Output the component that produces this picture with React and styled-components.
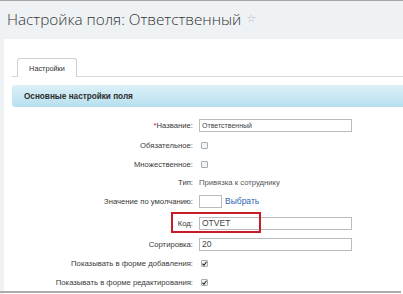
import React from 'react'
import styled, { createGlobalStyle } from 'styled-components'

const GlobalStyle = createGlobalStyle`
  html, body { margin: 0; padding: 0; }
  body {
    background: #eef2f4;
    font-family: "Liberation Sans", Arial, sans-serif;
    overflow: hidden;
  }
`

const Page = styled.div`
  width: 403px;
  height: 294px;
  border-top: 1px solid #a3a6a9;
  box-sizing: border-box;
  display: flex;
  flex-direction: column;
`

const TitleBar = styled.div`
  height: 38px;
  display: flex;
  align-items: center;
  padding-left: 7px;
  padding-bottom: 3px;
  box-sizing: border-box;
`

const Title = styled.h1`
  margin: 0;
  font-family: "Open Sans", "Noto Sans", sans-serif;
  font-weight: 300;
  font-size: 15.3px;
  color: #333;
`

const Star = styled.span`
  margin-left: 5px;
  font-size: 11px;
  color: #b8bcc0;
  font-family: "DejaVu Sans", sans-serif;
`

const Panel = styled.div`
  margin-left: 4px;
  background: #fff;
  padding: 19px 0 0 8px;
  flex: 1;
  display: flex;
  flex-direction: column;
`

const TabBar = styled.div`
  display: flex;
  border-bottom: 1px solid #d6d8da;
  padding-left: 5px;
  height: 18px;
`

const Tab = styled.div`
  width: 60px;
  height: 19px;
  box-sizing: border-box;
  border: 1px solid #cfd2d4;
  border-bottom: none;
  border-radius: 3px 3px 0 0;
  background: #fff;
  font-size: 7.3px;
  color: #333;
  display: flex;
  align-items: center;
  justify-content: center;
`

const SectionHeader = styled.div`
  margin-top: 8px;
  height: 22px;
  border-radius: 3px 0 0 3px;
  background: linear-gradient(to bottom, #dcf0f8, #b7dfee);
  display: flex;
  align-items: center;
  padding-left: 12px;
  font-size: 8.2px;
  font-weight: bold;
  color: #2b2b2b;
`

const Rows = styled.div`
  padding-top: 8px;
  display: flex;
  flex-direction: column;
`

const Row = styled.div`
  position: relative;
  height: ${p => p.h}px;
  display: grid;
  grid-template-columns: 181px 1fr;
  column-gap: 6px;
  align-items: center;
`

const Label = styled.div`
  text-align: right;
  font-size: 7.7px;
  color: #3a3a3a;
  white-space: nowrap;
`

const Req = styled.span`
  color: #d0232b;
`

const Value = styled.div`
  display: flex;
  align-items: center;
  gap: 3px;
  font-size: 7.7px;
  color: #555;
`

const Input = styled.div`
  width: ${p => p.w}px;
  height: 13px;
  box-sizing: border-box;
  border: 1px solid #b9bcbf;
  background: #fff;
  font-size: ${p => p.fs || 7}px;
  color: #444;
  display: flex;
  align-items: center;
  padding-left: 2px;
`

const Box = styled.span`
  width: 7px;
  height: 7px;
  margin-left: 2px;
  box-sizing: border-box;
  border: 1px solid #a9acaf;
  border-radius: 1px;
  background: #f3f4f5;
  display: flex;
  align-items: center;
  justify-content: center;
`

const Link = styled.a`
  color: #2a68b1;
  font-size: 8.5px;
  text-decoration: none;
`

const Highlight = styled.div`
  position: absolute;
  left: 159px;
  top: 1px;
  width: 90px;
  height: 21px;
  box-sizing: border-box;
  border: 2px solid #c81b2a;
`

const BottomLine = styled.div`
  margin-left: -12px;
  width: 401px;
  height: 2px;
  background: #a9abad;
`

const Checkbox = ({ checked }) => (
  <Box>
    {checked && (
      <svg width="5" height="5" viewBox="0 0 10 10">
        <path d="M1 5.5 L4 8.5 L9 1.5" fill="none" stroke="#222" strokeWidth="2.2" />
      </svg>
    )}
  </Box>
)

export default function App() {
  return (
    <>
      <GlobalStyle />
      <Page>
        <TitleBar>
          <Title>Настройка поля: Ответственный</Title>
          <Star>☆</Star>
        </TitleBar>
        <Panel>
          <TabBar>
            <Tab>Настройки</Tab>
          </TabBar>
          <SectionHeader>Основные настройки поля</SectionHeader>
          <Rows>
            <Row h={20}>
              <Label><Req>*</Req>Название:</Label>
              <Value><Input w={153}>Ответственный</Input></Value>
            </Row>
            <Row h={20}>
              <Label>Обязательное:</Label>
              <Value><Checkbox /></Value>
            </Row>
            <Row h={18}>
              <Label>Множественное:</Label>
              <Value><Checkbox /></Value>
            </Row>
            <Row h={18}>
              <Label>Тип:</Label>
              <Value>Привязка к сотруднику</Value>
            </Row>
            <Row h={20}>
              <Label>Значение по умолчанию:</Label>
              <Value>
                <Input w={23} />
                <Link href="#">Выбрать</Link>
              </Value>
            </Row>
            <Row h={24}>
              <Label>Код:</Label>
              <Value><Input w={153} fs={8.5}>OTVET</Input></Value>
              <Highlight />
            </Row>
            <Row h={18}>
              <Label>Сортировка:</Label>
              <Value><Input w={153} fs={8.5}>20</Input></Value>
            </Row>
            <Row h={20}>
              <Label>Показывать в форме добавления:</Label>
              <Value><Checkbox checked /></Value>
            </Row>
            <Row h={18}>
              <Label>Показывать в форме редактирования:</Label>
              <Value><Checkbox checked /></Value>
            </Row>
            <BottomLine />
          </Rows>
        </Panel>
      </Page>
    </>
  )
}
